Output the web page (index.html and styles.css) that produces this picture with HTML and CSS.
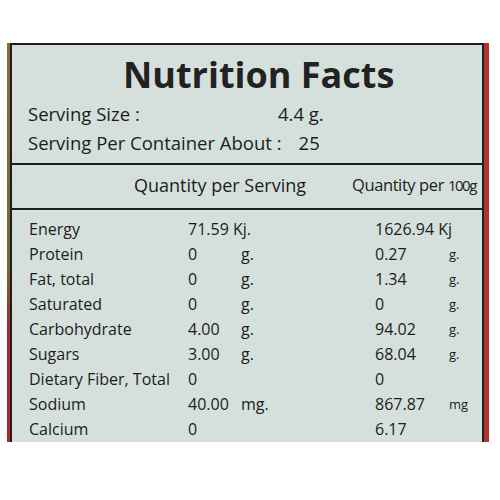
FILE: index.html
```html
<!DOCTYPE html>
<html lang="en">
<head>
    <meta charset="UTF-8">
    <title>Nutrition Facts</title>
    <link rel="stylesheet" href="styles.css">
</head>
<body>
    <div class="pack">
        <div class="label">
            <div class="top">
                <h1 class="title">Nutrition Facts</h1>
                <div class="serving">
                    <span class="serving-name">Serving Size :</span>
                    <span>4.4 g.</span>
                </div>
                <div class="serving">
                    <span>Serving Per Container About :</span>
                    <span class="serving-count">25</span>
                </div>
            </div>

            <div class="head">
                <span></span>
                <span>Quantity per Serving</span>
                <span class="head-100">Quantity per <span class="small">100g</span></span>
            </div>

            <div class="rows">
                <div class="row"><span>Energy</span><span class="wide">71.59 Kj.</span><span class="wide">1626.94 Kj</span></div>
                <div class="row"><span>Protein</span><span>0</span><span>g.</span><span>0.27</span><span class="unit">g.</span></div>
                <div class="row"><span>Fat, total</span><span>0</span><span>g.</span><span>1.34</span><span class="unit">g.</span></div>
                <div class="row"><span>Saturated</span><span>0</span><span>g.</span><span>0</span><span class="unit">g.</span></div>
                <div class="row"><span>Carbohydrate</span><span>4.00</span><span>g.</span><span>94.02</span><span class="unit">g.</span></div>
                <div class="row"><span>Sugars</span><span>3.00</span><span>g.</span><span>68.04</span><span class="unit">g.</span></div>
                <div class="row"><span>Dietary Fiber, Total</span><span>0</span><span></span><span>0</span><span></span></div>
                <div class="row"><span>Sodium</span><span>40.00</span><span>mg.</span><span>867.87</span><span class="unit">mg</span></div>
                <div class="row"><span>Calcium</span><span>0</span><span></span><span>6.17</span><span></span></div>
            </div>
        </div>
    </div>
</body>
</html>
```

FILE: styles.css
```css
body {
    margin: 0;
    background: #fff;
    font-family: "Open Sans", "Noto Sans", sans-serif;
    color: #1c1c1c;
}

/* packaging behind the label */
.pack {
    margin: 43px 0 0 7px;
    width: 474px;
    height: 399px;
    padding: 0 5px 0 3px;
    background:
        linear-gradient(to right, transparent 50%, #b3342c 50%),
        linear-gradient(#8c6c30, #6f6c34 55%, #a8282a 72%, #a8282a);
    overflow: hidden;
}

.label {
    height: 100%;
    border: 2px solid #1e1e1e;
    border-bottom: none;
    background: #d5e0dd;
    overflow: hidden;
}

/* title block */
.top {
    padding: 8px 0 6px 16px;
    border-bottom: 2px solid #1e1e1e;
}

.title {
    margin: 0 0 2px;
    padding-left: 95px;
    font-size: 36px;
    line-height: 44px;
    font-weight: 700;
    color: #222;
    white-space: nowrap;
}

.serving {
    display: flex;
    font-size: 18.5px;
    line-height: 29px;
    white-space: nowrap;
}

.serving-name {
    width: 250px;
}

.serving-count {
    margin-left: 17px;
}

/* column heads */
.head {
    display: grid;
    grid-template-columns: 106px 218px auto;
    padding: 0 0 3px 16px;
    border-bottom: 2px solid #1e1e1e;
    font-size: 18px;
    line-height: 40px;
    white-space: nowrap;
}

.head-100 {
    font-size: 16.5px;
    letter-spacing: -0.4px;
}

.head .small {
    font-size: 15px;
    letter-spacing: -1.5px;
}

/* nutrient rows */
.rows {
    padding: 7px 0 0 17px;
}

.row {
    display: grid;
    grid-template-columns: 159px 53px 134px 74px auto;
    font-size: 16px;
    line-height: 25px;
    white-space: nowrap;
}

.row .wide {
    grid-column: span 2;
}

.row .unit {
    font-size: 13px;
}
```
